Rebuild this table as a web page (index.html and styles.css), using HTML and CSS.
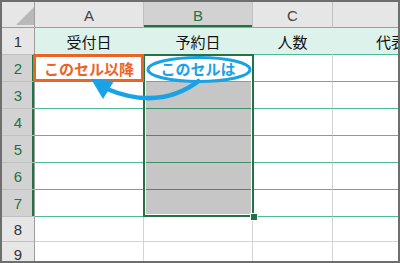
FILE: index.html
```html
<!DOCTYPE html>
<html lang="ja">
<head>
    <meta charset="UTF-8">
    <meta name="viewport" content="width=device-width, initial-scale=1.0">
    <title>予約表</title>
    <link rel="stylesheet" href="styles.css">
</head>
<body>
    <div class="sheet">
        <div class="grid">
            <!-- column headers -->
            <div class="corner"><span class="corner-mark"></span></div>
            <div class="colhead">A</div>
            <div class="colhead sel">B</div>
            <div class="colhead">C</div>
            <div class="colhead"></div>

            <!-- row 1: titles -->
            <div class="rowhead">1</div>
            <div class="cell title">受付日</div>
            <div class="cell title">予約日</div>
            <div class="cell title">人数</div>
            <div class="cell title lead">代表者名</div>

            <div class="rowhead sel">2</div>
            <div class="cell band note-orange">このセル以降</div>
            <div class="cell band active note-blue">このセルは</div>
            <div class="cell band"></div>
            <div class="cell band"></div>

            <div class="rowhead sel">3</div>
            <div class="cell band"></div>
            <div class="cell band picked"></div>
            <div class="cell band"></div>
            <div class="cell band"></div>

            <div class="rowhead sel">4</div>
            <div class="cell band"></div>
            <div class="cell band picked"></div>
            <div class="cell band"></div>
            <div class="cell band"></div>

            <div class="rowhead sel">5</div>
            <div class="cell band"></div>
            <div class="cell band picked"></div>
            <div class="cell band"></div>
            <div class="cell band"></div>

            <div class="rowhead sel">6</div>
            <div class="cell band"></div>
            <div class="cell band picked"></div>
            <div class="cell band"></div>
            <div class="cell band"></div>

            <div class="rowhead sel">7</div>
            <div class="cell band"></div>
            <div class="cell band picked"></div>
            <div class="cell band"></div>
            <div class="cell band"></div>

            <div class="rowhead">8</div>
            <div class="cell"></div>
            <div class="cell"></div>
            <div class="cell"></div>
            <div class="cell"></div>

            <div class="rowhead">9</div>
            <div class="cell"></div>
            <div class="cell"></div>
            <div class="cell"></div>
            <div class="cell"></div>

            <!-- selection B2:B7 and its fill handle -->
            <div class="selection"></div>
            <div class="fill-handle"></div>

            <!-- callouts -->
            <div class="box-orange"></div>
            <svg class="marks" width="400" height="263" viewBox="0 0 400 263">
                <ellipse cx="199" cy="69.5" rx="51" ry="12" fill="none" stroke="#1aa2e6" stroke-width="3"/>
                <path d="M200 80 Q160 111 107 89" fill="none" stroke="#1aa2e6" stroke-width="4.5"/>
                <polygon points="91,79 114,81 103,99" fill="#1aa2e6"/>
            </svg>
        </div>
    </div>
</body>
</html>
```

FILE: styles.css
```css
body {
    margin: 0;
    background-color: #fff;
}
.sheet {
    width: 396px;
    height: 259px;
    border: 2px solid #6e6e6e;
    overflow: hidden;
    font-family: "Noto Sans CJK JP", sans-serif;
}
.grid {
    position: relative;
    display: grid;
    grid-template-columns: 33px 109px 109px 80px 146px;
    grid-template-rows: 26px repeat(7, 27px) 25px 25px;
}
.grid > div {
    box-sizing: border-box;
    display: flex;
    align-items: center;
    justify-content: center;
}

/* headers */
.corner {
    background-color: #e6e6e6;
    border-right: 1px solid #9e9e9e;
    border-bottom: 1px solid #9e9e9e;
}
.grid > .corner {
    align-items: flex-end;
    justify-content: flex-end;
    padding: 0 0 2px 0;
}
.corner-mark {
    width: 18px;
    height: 18px;
    background-color: #b9b9b9;
    clip-path: polygon(100% 0, 100% 100%, 0 100%);
}
.colhead {
    background-color: #e6e6e6;
    border-right: 1px solid #c0c0c0;
    border-bottom: 1px solid #9e9e9e;
    font-family: "Liberation Sans", sans-serif;
    font-size: 15px;
    color: #444;
    padding-top: 1px;
}
.colhead.sel {
    background-color: #d2d2d2;
    color: #217346;
    box-shadow: inset 0 -2px 0 #217346;
}
.rowhead {
    background-color: #e6e6e6;
    border-right: 1px solid #9e9e9e;
    border-bottom: 1px solid #c0c0c0;
    font-family: "Liberation Sans", sans-serif;
    font-size: 15px;
    color: #333;
}
.rowhead.sel {
    background-color: #d2d2d2;
    color: #217346;
    box-shadow: inset -2px 0 0 #217346;
}

/* cells */
.cell {
    background-color: #fff;
    border-right: 1px solid #d4d4d4;
    border-bottom: 1px solid #d4d4d4;
    font-size: 15px;
    color: #111;
}
.cell.title {
    background-color: #ddf2eb;
    border-right-color: #ddf2eb;
    border-bottom-color: #4cba92;
}
.grid > .lead {
    justify-content: flex-start;
    padding-left: 43px;
    white-space: nowrap;
}
.cell.band {
    border-bottom-color: #4cba92;
}
.cell.picked {
    background-color: #c6c6c6;
    border-bottom-color: #3d8e6c;
}
.note-orange {
    color: #eb6426;
    font-weight: bold;
}
.note-blue {
    color: #1aa2e6;
    font-weight: bold;
}

/* overlays */
.selection {
    position: absolute;
    left: 141px;
    top: 52px;
    width: 111px;
    height: 163px;
    box-sizing: border-box;
    border: 2px solid #217346;
    box-shadow: inset 0 0 0 1px #fff;
}
.fill-handle {
    position: absolute;
    left: 248px;
    top: 211px;
    width: 8px;
    height: 8px;
    box-sizing: border-box;
    background-color: #217346;
    border: 1px solid #fff;
}
.box-orange {
    position: absolute;
    left: 31px;
    top: 52px;
    width: 111px;
    height: 28px;
    box-sizing: border-box;
    border: 3px solid #eb6426;
}
.marks {
    position: absolute;
    left: -2px;
    top: -2px;
}
```
